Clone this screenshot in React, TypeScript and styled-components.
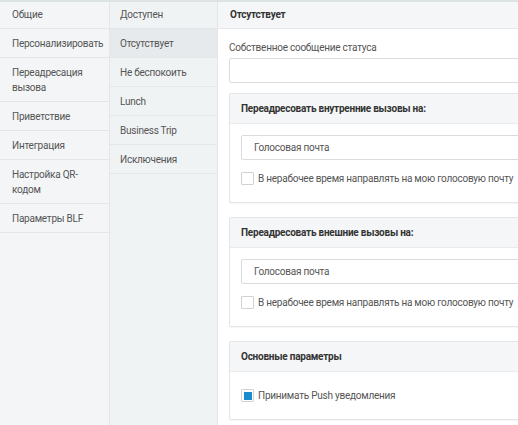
import styled, { createGlobalStyle } from "styled-components";

const GlobalStyle = createGlobalStyle`
  *, *::before, *::after {
    box-sizing: border-box;
  }
  html, body {
    margin: 0;
    padding: 0;
    overflow: hidden;
    background: #ffffff;
  }
  body {
    font-family: Roboto, "Liberation Sans", sans-serif;
    font-size: 10px;
    letter-spacing: -0.24px;
    color: #555;
  }
`;

// レイアウト
const SPage = styled.div`
  display: flex;
  width: 518px;
  height: 425px;
  border-top: 2px solid #dde2e5;
  overflow: hidden;
`;

const SColumn = styled.div<{ $width: number; $bg: string }>`
  width: ${(p) => p.$width}px;
  flex-shrink: 0;
  background: ${(p) => p.$bg};
  border-right: 1px solid #e2e6e8;
  display: flex;
  flex-direction: column;
`;

const SItem = styled.div<{ $active?: boolean }>`
  padding: 7px 6px 6px 12px;
  line-height: 15px;
  border-bottom: 1px solid #e3e7e9;
  background: ${(p) => (p.$active ? "#e6eaec" : "transparent")};
  color: #555;

  &:first-child {
    padding-top: 5px;
  }
`;

const SSubItem = styled(SItem)`
  padding-left: 10px;
`;

const SMain = styled.div`
  flex: 1;
  min-width: 0;
  display: flex;
  flex-direction: column;
  background: #fff;
  overflow: hidden;
`;

const SMainHeader = styled.div`
  height: 27px;
  line-height: 26px;
  padding-left: 12px;
  background: #f5f6f7;
  border-bottom: 1px solid #e6e8ea;
  font-weight: 700;
  color: #333;
`;

const SBody = styled.div`
  width: 330px;
  flex-shrink: 0;
  padding: 11px 0 0 11px;
  display: flex;
  flex-direction: column;
`;

const SLabel = styled.div`
  line-height: 15px;
  margin-bottom: 3px;
`;

const SInput = styled.div`
  height: 25px;
  border: 1px solid #d9dcde;
  border-radius: 2px;
  background: #fff;
  margin-bottom: 10px;
`;

const SCard = styled.div`
  border: 1px solid #e3e6e8;
  border-radius: 2px;
  box-shadow: 0 1px 1px rgba(0, 0, 0, 0.04);
  margin-bottom: 14px;
`;

const SCardHeader = styled.div`
  height: 30px;
  line-height: 29px;
  padding-left: 11px;
  background: #f5f6f7;
  border-bottom: 1px solid #e9ebec;
  font-weight: 700;
  color: #333;
`;

const SCardBody = styled.div<{ $top: number }>`
  padding: ${(p) => p.$top}px 0 16px 11px;
  display: flex;
  flex-direction: column;
  gap: 11px;
`;

const SSelect = styled.div`
  height: 25px;
  line-height: 23px;
  border: 1px solid #d9dcde;
  border-radius: 2px;
  padding-left: 12px;
  color: #555;
`;

const SCheckRow = styled.label`
  display: flex;
  align-items: center;
  gap: 4px;
  height: 15px;
  white-space: nowrap;
  color: #555;
`;

const SCheck = styled.span<{ $checked?: boolean }>`
  width: 13px;
  height: 13px;
  flex-shrink: 0;
  border: 1px solid #cfd3d6;
  border-radius: 1px;
  background: #fff;
  display: flex;
  align-items: center;
  justify-content: center;

  &::after {
    content: "";
    width: 8px;
    height: 8px;
    background: ${(p) => (p.$checked ? "#1b8dcc" : "transparent")};
  }
`;

const menu = [
  "Общие",
  "Персонализировать",
  "Переадресация вызова",
  "Приветствие",
  "Интеграция",
  "Настройка QR-кодом",
  "Параметры BLF",
];

const statuses = ["Доступен", "Отсутствует", "Не беспокоить", "Lunch", "Business Trip", "Исключения"];

const ForwardCard = ({ title }: { title: string }) => (
  <SCard>
    <SCardHeader>{title}</SCardHeader>
    <SCardBody $top={11}>
      <SSelect>Голосовая почта</SSelect>
      <SCheckRow>
        <SCheck />
        В нерабочее время направлять на мою голосовую почту
      </SCheckRow>
    </SCardBody>
  </SCard>
);

export default function App() {
  return (
    <>
      <GlobalStyle />
      <SPage>
        <SColumn $width={110} $bg="#f3f5f6">
          {menu.map((m) => (
            <SItem key={m}>{m}</SItem>
          ))}
        </SColumn>
        <SColumn $width={108} $bg="#f0f3f4">
          {statuses.map((s) => (
            <SSubItem key={s} $active={s === "Отсутствует"}>
              {s}
            </SSubItem>
          ))}
        </SColumn>
        <SMain>
          <SMainHeader>Отсутствует</SMainHeader>
          <SBody>
            <SLabel>Собственное сообщение статуса</SLabel>
            <SInput />
            <ForwardCard title="Переадресовать внутренние вызовы на:" />
            <ForwardCard title="Переадресовать внешние вызовы на:" />
            <SCard>
              <SCardHeader>Основные параметры</SCardHeader>
              <SCardBody $top={16}>
                <SCheckRow>
                  <SCheck $checked />
                  Принимать Push уведомления
                </SCheckRow>
              </SCardBody>
            </SCard>
          </SBody>
        </SMain>
      </SPage>
    </>
  );
}
